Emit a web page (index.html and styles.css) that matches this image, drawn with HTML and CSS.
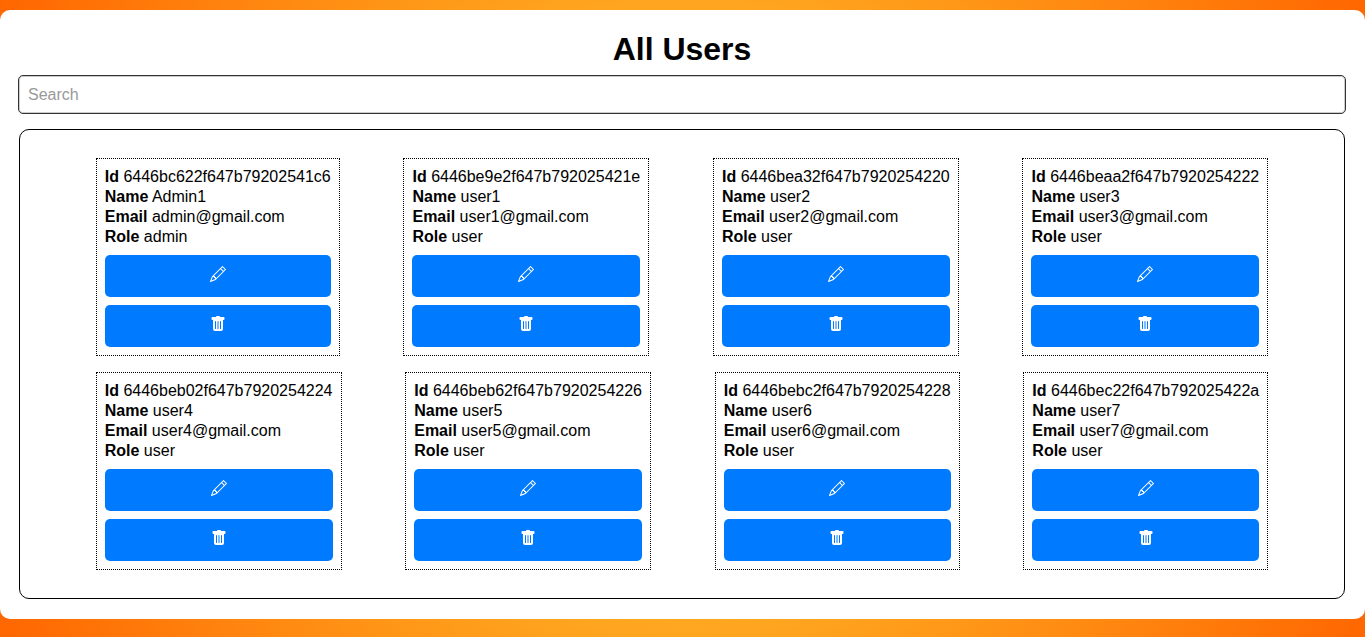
FILE: index.html
```html
<!DOCTYPE html>
<html lang="en">
<head>
<meta charset="utf-8">
<title>All Users</title>
<link rel="stylesheet" href="styles.css">
</head>
<body>
<svg class="sprite" aria-hidden="true">
  <symbol id="pencil" viewBox="0 0 16 16"><path d="M12.146.146a.5.5 0 0 1 .708 0l3 3a.5.5 0 0 1 0 .708l-10 10a.5.5 0 0 1-.168.11l-5 2a.5.5 0 0 1-.65-.65l2-5a.5.5 0 0 1 .11-.168l10-10zM11.207 2.5 13.5 4.793 14.793 3.5 12.5 1.207 11.207 2.5zm1.586 3L10.5 3.207 4 9.707V10h.5a.5.5 0 0 1 .5.5v.5h.5a.5.5 0 0 1 .5.5v.5h.293l6.5-6.5zm-9.761 5.175-.106.106-1.528 3.821 3.821-1.528.106-.106A.5.5 0 0 1 5 12.5V12h-.5a.5.5 0 0 1-.5-.5V11h-.5a.5.5 0 0 1-.468-.325z"/></symbol>
  <symbol id="trash" viewBox="0 0 16 16"><path d="M2.5 1a1 1 0 0 0-1 1v1a1 1 0 0 0 1 1H3v9a2 2 0 0 0 2 2h6a2 2 0 0 0 2-2V4h.5a1 1 0 0 0 1-1V2a1 1 0 0 0-1-1H10a1 1 0 0 0-1-1H7a1 1 0 0 0-1 1H2.5zm3 4a.5.5 0 0 1 .5.5v7a.5.5 0 0 1-1 0v-7a.5.5 0 0 1 .5-.5zM8 5a.5.5 0 0 1 .5.5v7a.5.5 0 0 1-1 0v-7A.5.5 0 0 1 8 5zm3 .5v7a.5.5 0 0 1-1 0v-7a.5.5 0 0 1 1 0z"/></symbol>
</svg>
<main class="panel">
  <h1 class="title">All Users</h1>
  <input class="search" type="search" placeholder="Search" aria-label="Search">
  <section class="users" id="users"></section>
</main>
<template id="card">
  <article class="card">
    <p><b>Id</b> <span data-f="id"></span></p>
    <p><b>Name</b> <span data-f="name"></span></p>
    <p><b>Email</b> <span data-f="email"></span></p>
    <p><b>Role</b> <span data-f="role"></span></p>
    <button class="action" type="button" aria-label="Edit"><svg class="icon"><use href="#pencil"/></svg></button>
    <button class="action" type="button" aria-label="Delete"><svg class="icon"><use href="#trash"/></svg></button>
  </article>
</template>
<script src="users.js"></script>
</body>
</html>
```
FILE: users.js
```js
const users = [
  ["6446bc622f647b79202541c6", "Admin1", "admin@gmail.com", "admin"],
  ["6446be9e2f647b792025421e", "user1", "user1@gmail.com", "user"],
  ["6446bea32f647b7920254220", "user2", "user2@gmail.com", "user"],
  ["6446beaa2f647b7920254222", "user3", "user3@gmail.com", "user"],
  ["6446beb02f647b7920254224", "user4", "user4@gmail.com", "user"],
  ["6446beb62f647b7920254226", "user5", "user5@gmail.com", "user"],
  ["6446bebc2f647b7920254228", "user6", "user6@gmail.com", "user"],
  ["6446bec22f647b792025422a", "user7", "user7@gmail.com", "user"]
];
const list = document.getElementById("users");
const template = document.getElementById("card");
for (const user of users) {
  const node = template.content.cloneNode(true);
  node.querySelectorAll("[data-f]").forEach((el, i) => { el.textContent = user[i]; });
  list.append(node);
}
```
FILE: styles.css
```css
* { box-sizing: border-box; }

body {
  min-height: 100vh;
  margin: 0;
  padding: 10px 0 18px;
  background: radial-gradient(circle, #ffd335 0%, #ff6600 100%);
  color: #000;
  font: 16px/20px "Liberation Sans", Arial, sans-serif;
}

.sprite { display: none; }

.panel {
  display: flex;
  flex-direction: column;
  padding: 19px 19px 20px 18px;
  border-radius: 10px;
  background: #fff;
}

.title {
  margin: 0 0 6px;
  font-size: 32px;
  line-height: 40px;
  text-align: center;
}

.search {
  width: 100%;
  height: 39px;
  padding: 0 9px;
  border: 1px solid #333;
  border-radius: 5px;
  box-shadow: inset 0 0 0 1px #ccc;
  background: #fff;
  font: inherit;
  appearance: none;
}

.search::placeholder { color: #999; }

.users {
  display: flex;
  flex-wrap: wrap;
  justify-content: space-evenly;
  margin: 15px 1px 0;
  padding: 20px;
  border: 1px solid #000;
  border-radius: 10px;
}

.card {
  margin: 8px;
  padding: 8px;
  border: 1px dotted #000;
}

.card p { margin: 0; }

.action {
  display: block;
  width: 100%;
  height: 42px;
  margin-top: 8px;
  padding: 11px 0 15px;
  border: 0;
  border-radius: 5px;
  background: #007bff;
  color: #fff;
}

.icon {
  display: block;
  width: 16px;
  height: 16px;
  margin: 0 auto;
  fill: currentColor;
}
```
